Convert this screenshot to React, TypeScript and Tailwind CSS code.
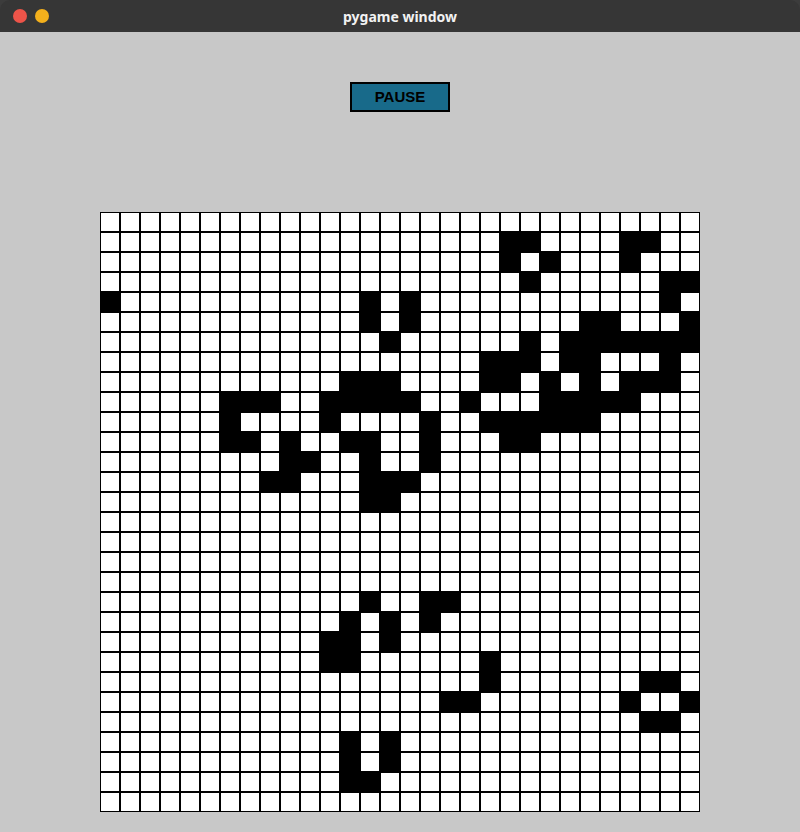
const ROWS = 30;
const COLS = 30;

// live cells per row, by column index
const live: number[][] = [
  [],
  [20, 21, 26, 27],
  [20, 22, 26],
  [21, 28, 29],
  [0, 13, 15, 28],
  [13, 15, 24, 25, 29],
  [14, 21, 23, 24, 25, 26, 27, 28, 29],
  [19, 20, 21, 23, 24, 28],
  [12, 13, 14, 19, 20, 22, 24, 26, 27, 28],
  [6, 7, 8, 11, 12, 13, 14, 15, 18, 22, 23, 24, 25, 26],
  [6, 11, 16, 19, 20, 21, 22, 23, 24],
  [6, 7, 9, 12, 13, 16, 20, 21],
  [9, 10, 13, 16],
  [8, 9, 13, 14, 15],
  [13, 14],
  [],
  [],
  [],
  [],
  [13, 16, 17],
  [12, 14, 16],
  [11, 12, 14],
  [11, 12, 19],
  [19, 27, 28],
  [17, 18, 26, 29],
  [27, 28],
  [12, 14],
  [12, 14],
  [12, 13],
  [],
];

const TitleBar = () => (
  <div className="relative h-8 bg-[#363636] rounded-t-[10px] flex items-center">
    <div className="flex items-center gap-2 pl-[13px]">
      <span className="w-[14px] h-[14px] rounded-full bg-[#ed5449]" />
      <span className="w-[14px] h-[14px] rounded-full bg-[#f3b01c]" />
    </div>
    <div
      className="absolute inset-0 flex items-center justify-center text-[14px] font-bold text-[#f2f2f2]"
      style={{ fontFamily: '"Noto Sans", "DejaVu Sans", sans-serif' }}
    >
      pygame window
    </div>
  </div>
);

const Board = () => (
  <div className="flex flex-col">
    {Array.from({ length: ROWS }, (_, r) => (
      <div key={r} className="flex">
        {Array.from({ length: COLS }, (_, c) => (
          <div
            key={c}
            className={`w-5 h-5 border border-black ${live[r].includes(c) ? 'bg-black' : 'bg-white'}`}
          />
        ))}
      </div>
    ))}
  </div>
);

export default function App() {
  return (
    <div className="w-[800px] h-[832px] bg-[#3c3c3c] overflow-hidden">
      <TitleBar />
      <div className="h-[800px] bg-[#c8c8c8] flex flex-col items-center">
        <button
          className="mt-[50px] w-[100px] h-[30px] border-2 border-black bg-[#186a8a] text-black text-[15px] font-bold flex items-center justify-center"
          style={{ fontFamily: '"Liberation Sans", Arial, sans-serif' }}
        >
          PAUSE
        </button>
        <div className="mt-[100px]">
          <Board />
        </div>
      </div>
    </div>
  );
}
